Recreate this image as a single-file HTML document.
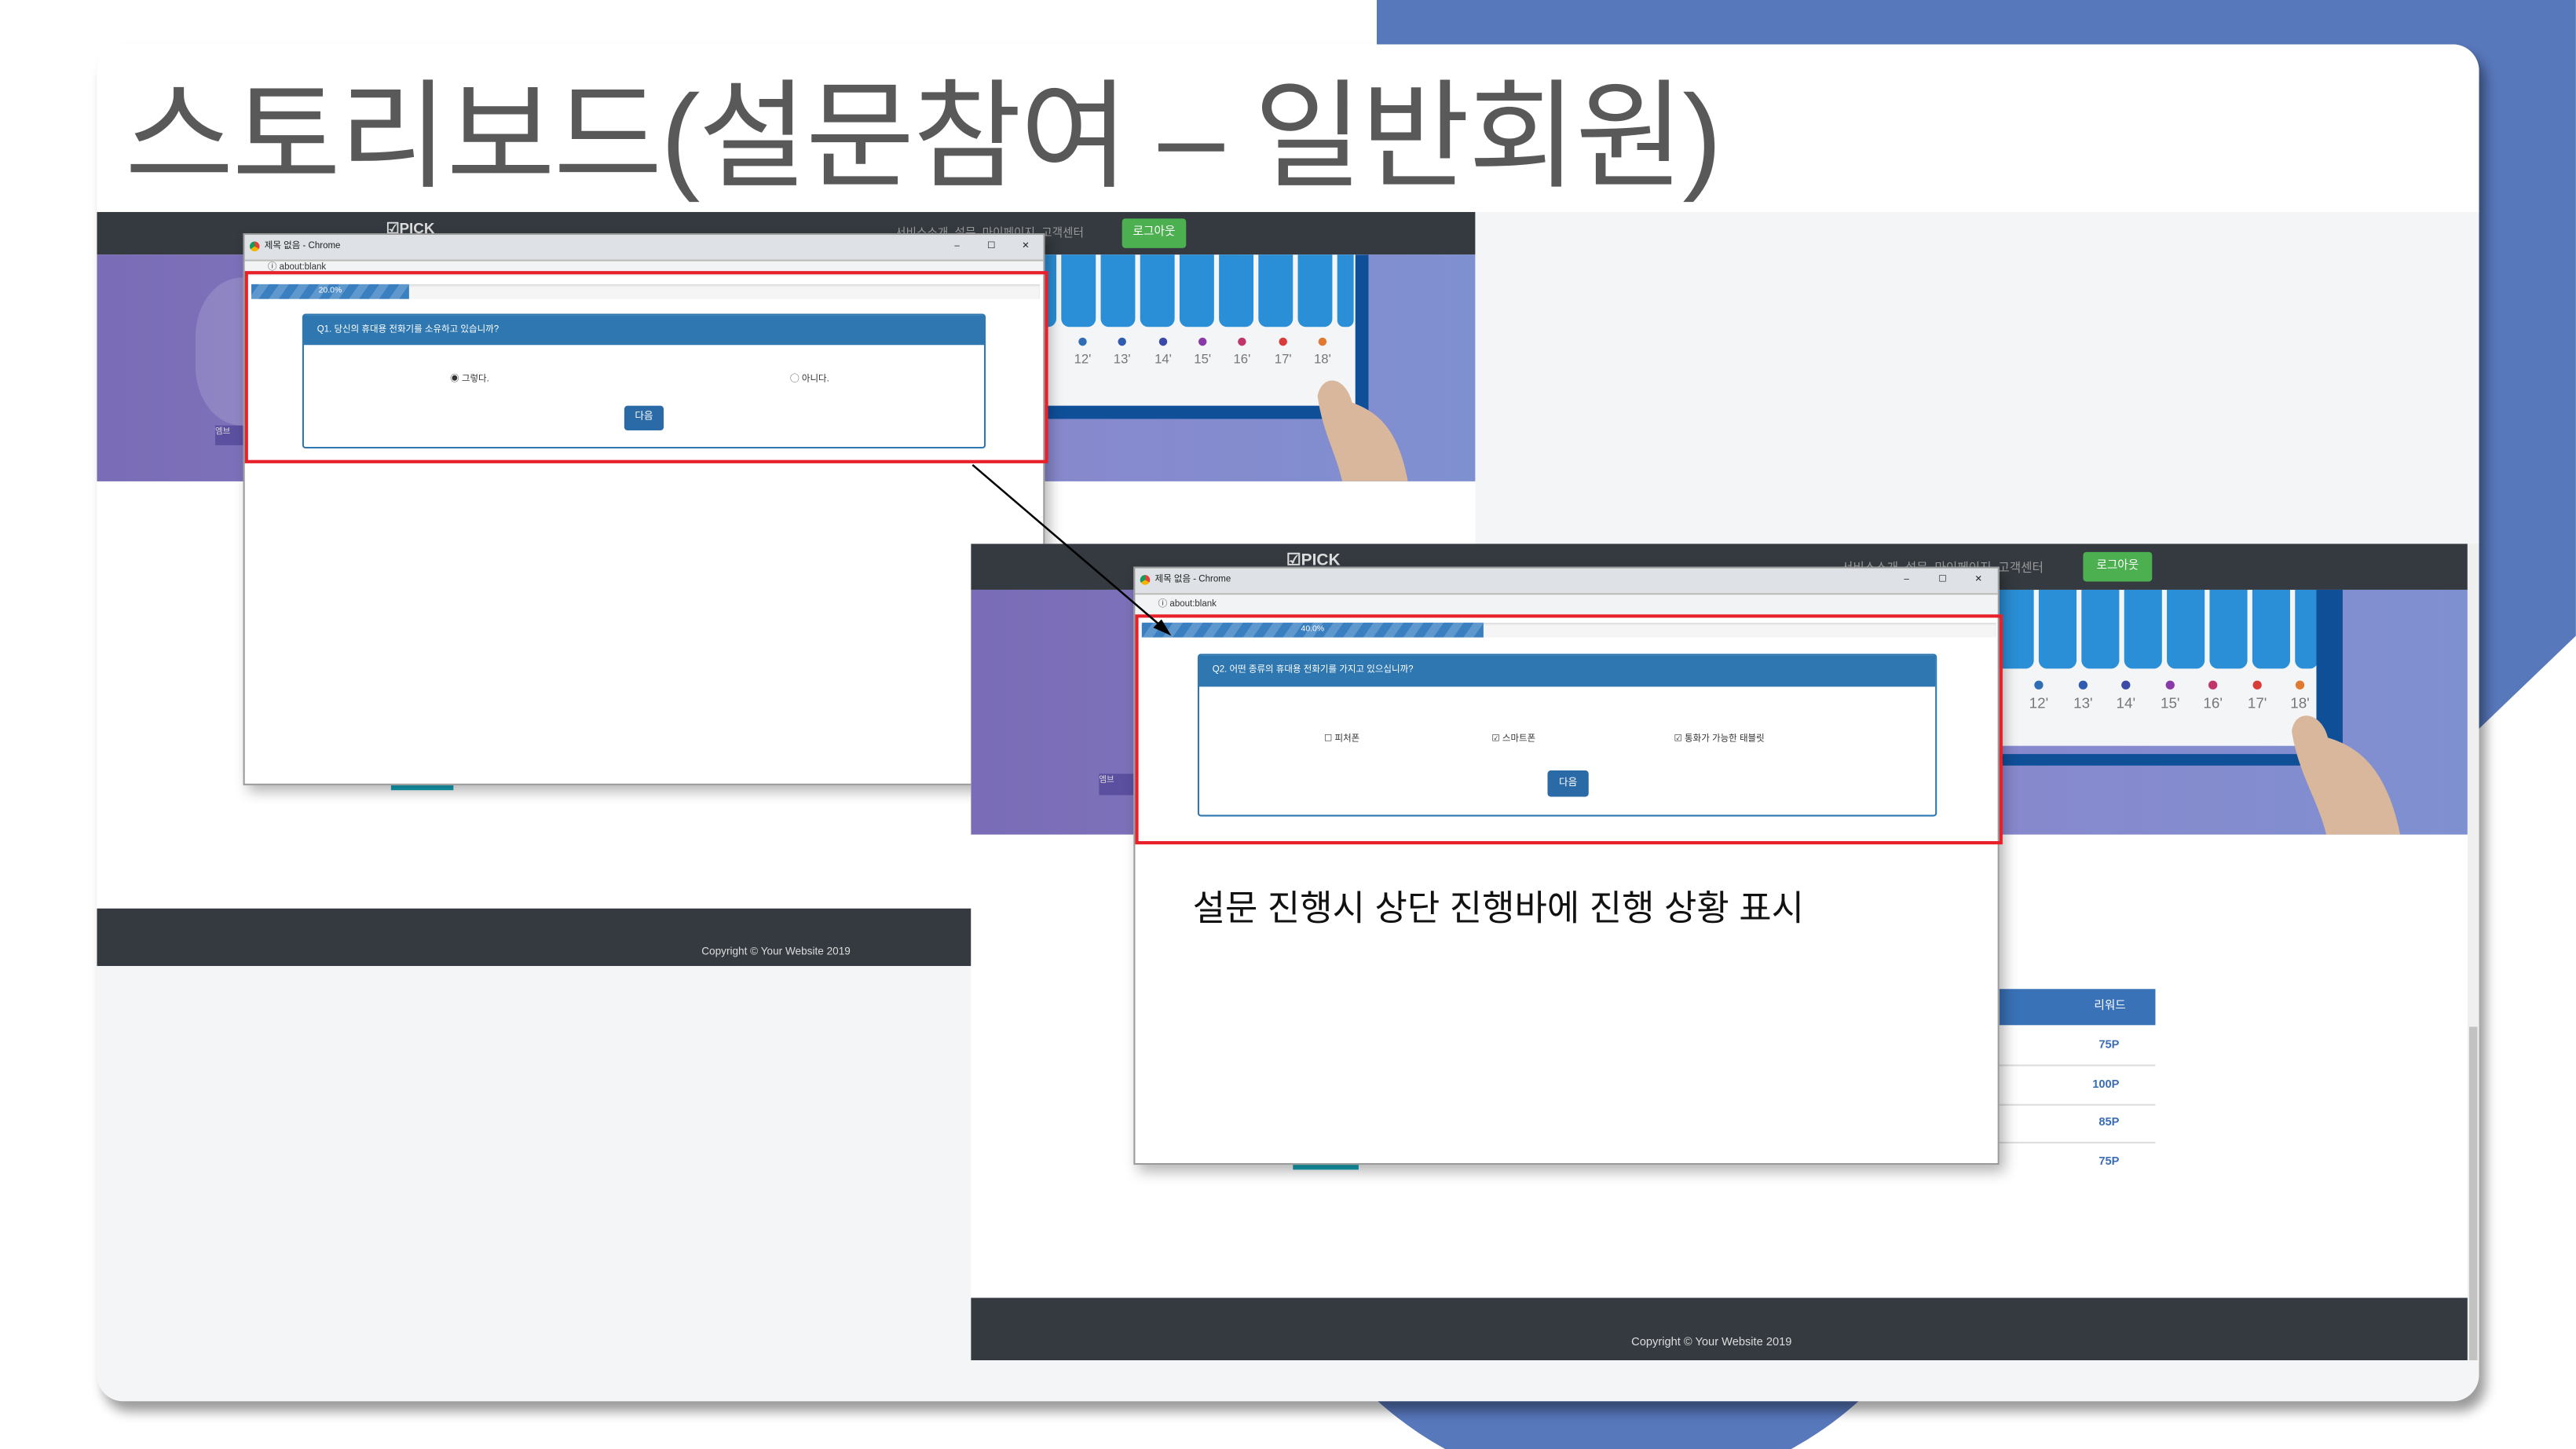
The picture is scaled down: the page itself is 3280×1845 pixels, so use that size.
<!DOCTYPE html>
<html><head><meta charset="utf-8">
<style>
*{margin:0;padding:0;box-sizing:border-box}
html,body{width:3280px;height:1845px;overflow:hidden;background:#fff}
body{font-family:"Liberation Sans","Noto Sans CJK KR",sans-serif}
#w{position:absolute;left:0;top:0;width:1568px;height:882px;transform:scale(2.0918);transform-origin:0 0;overflow:hidden}
.a{position:absolute}
.nav{background:#343a40}
.k{font-family:"Liberation Sans","Noto Sans CJK KR",sans-serif}
.pop{background:#fff;border:1px solid #9a9a9a;box-shadow:3px 4px 8px rgba(0,0,0,.3)}
.tb{background:#dee1e6;font-size:5.5px;color:#222;line-height:15px;padding-left:12px}
.ab{background:#f1f3f4;font-size:5.5px;color:#333;padding-left:14px;border-top:1px solid #bbb}
.prog{background:#f5f5f5;box-shadow:inset 0 1px 1px rgba(0,0,0,.1)}
.fill{background:repeating-linear-gradient(-55deg,#3a7fc0 0 5px,#5e98cd 5px 10px);color:#fff;font-size:5px;text-align:center;line-height:9px}
.ph{background:#2e77b0;color:#fff;font-size:5.5px;padding-left:8px}
.red{border:2px solid #e8202a}
.btn{background:#2a6aa6;color:#fff;font-size:6px;text-align:center;border-radius:2px}
.hero{background:linear-gradient(90deg,#7a6cb6,#8a86cc 60%,#7f90d0)}
</style></head><body><div id="w">
<div class="a" style="left:838px;top:0;width:730px;height:450px;background:#5878bc;clip-path:polygon(0 0,100% 0,100% 86%,91% 100%,0 100%)"></div>
<div class="a" style="left:766px;top:471px;width:438px;height:438px;border-radius:50%;background:#5878bc"></div>
<div class="a" style="left:59px;top:27px;width:1450px;height:826px;border-radius:16px;background:#f4f5f7;box-shadow:4px 6px 7px rgba(0,0,0,.4);overflow:hidden">
 <div class="a" style="left:0;top:0;width:1450px;height:102px;background:#fff"></div>
 <div class="a" style="left:1443px;top:304px;width:7px;height:497px;background:#efefef"></div>
 <div class="a" style="left:1444px;top:598px;width:5px;height:203px;background:#c2c2c2"></div>
</div>
<div class="a k" style="left:76px;top:36px;font-size:72px;line-height:96px;color:#595959;white-space:nowrap;letter-spacing:-1px">스토리보드(설문참여 – 일반회원)</div>

<div class="a" style="left:59px;top:129px;width:839px;height:459px;background:#fff;overflow:hidden">
 <div class="a nav" style="left:0;top:0;width:839px;height:26px"></div>
 <div class="a" style="left:176px;top:5px;color:#ddd;font-size:9px;font-weight:bold">☑PICK</div>
 <div class="a" style="left:486px;top:8px;color:#999;font-size:7px;white-space:nowrap">서비스소개 &nbsp;설문 &nbsp;마이페이지 &nbsp;고객센터</div>
 <div class="a" style="left:624px;top:4px;width:39px;height:18px;background:#4caf50;border-radius:2px;color:#fff;font-size:7px;line-height:18px;text-align:center">로그아웃</div>
 <div class="a hero" style="left:0;top:26px;width:839px;height:138px"></div>
 <div class="a" style="left:60px;top:40px;width:70px;height:90px;border-radius:40%;background:rgba(255,255,255,.15)"></div>
 <svg class="a" style="left:560px;top:26px" width="279" height="138">
  <rect x="0" y="0" width="212" height="92" fill="#f4f5f6"/>
  <g fill="#2a8fd6"><rect x="3" y="-5" width="21" height="49" rx="5"/><rect x="27" y="-5" width="21" height="49" rx="5"/><rect x="51" y="-5" width="21" height="49" rx="5"/><rect x="75" y="-5" width="21" height="49" rx="5"/><rect x="99" y="-5" width="21" height="49" rx="5"/><rect x="123" y="-5" width="21" height="49" rx="5"/><rect x="147" y="-5" width="21" height="49" rx="5"/><rect x="171" y="-5" width="21" height="49" rx="5"/><rect x="195" y="-5" width="10" height="49" rx="4"/></g>
  <g><circle cx="40" cy="53" r="2.5" fill="#2f6db5"/><circle cx="64" cy="53" r="2.5" fill="#2f5cb0"/><circle cx="89" cy="53" r="2.5" fill="#3a4aa8"/><circle cx="113" cy="53" r="2.5" fill="#8a3aa8"/><circle cx="137" cy="53" r="2.5" fill="#c0356a"/><circle cx="162" cy="53" r="2.5" fill="#d93a3a"/><circle cx="186" cy="53" r="2.5" fill="#e07a30"/></g>
  <g font-size="8" fill="#777" text-anchor="middle" font-family="Liberation Sans"><text x="40" y="66">12'</text><text x="64" y="66">13'</text><text x="89" y="66">14'</text><text x="113" y="66">15'</text><text x="137" y="66">16'</text><text x="162" y="66">17'</text><text x="186" y="66">18'</text></g>
  <rect x="0" y="92" width="214" height="8" fill="#0f4f98"/><rect x="206" y="0" width="8" height="100" fill="#0f4f98"/>
  <path d="M183 86 C186 72 200 74 204 90 C220 96 232 106 238 138 L198 138 C194 120 186 108 183 86Z" fill="#d9b79c"/>
 </svg>
 <div class="a" style="left:72px;top:130px;width:20px;height:12px;background:#5b4fa0;color:#ddd;font-size:5px">엠브</div>
 <div class="a" style="left:179px;top:344px;width:38px;height:8px;background:#17a2b8"></div>
 <div class="a nav" style="left:0;top:424px;width:839px;height:35px"></div>
 <div class="a" style="left:368px;top:447px;color:#ddd;font-size:6.5px;white-space:nowrap">Copyright © Your Website 2019</div>
</div>
<div class="a pop" style="left:148px;top:142px;width:488px;height:336px">
 <div class="a tb" style="left:0;top:0;width:486px;height:15px">제목 없음 - Chrome<span style="position:absolute;left:432px">–</span><span style="position:absolute;left:452px">☐</span><span style="position:absolute;left:473px">✕</span></div>
 <div class="a" style="left:3px;top:4px;width:6px;height:6px;border-radius:50%;background:conic-gradient(#db4437 0 33%,#f4b400 0 66%,#0f9d58 0)"></div>
 <div class="a ab" style="left:0;top:15px;width:486px;height:10px;line-height:9px">ⓘ about:blank</div>
 <div class="a prog" style="left:4px;top:30px;width:480px;height:9px"><div class="a fill" style="left:0;top:0;width:96px;height:9px">20.0%</div></div>
 <div class="a" style="left:35px;top:48px;width:416px;height:82px;border:1px solid #2e77b0;border-radius:2px;background:#fff">
  <div class="a ph" style="left:0;top:0;width:414px;height:18px;line-height:18px">Q1. 당신의 휴대용 전화기를 소유하고 있습니까?</div>
  <div class="a" style="left:89px;top:34px;font-size:5.5px;color:#333;white-space:nowrap">◉ 그렇다.</div>
  <div class="a" style="left:296px;top:34px;font-size:5.5px;color:#333;white-space:nowrap">◯ 아니다.</div>
  <div class="a btn" style="left:195px;top:55px;width:24px;height:15px;line-height:15px">다음</div>
 </div>
</div>
<div class="a red" style="left:149px;top:165px;width:489px;height:117px"></div>

<div class="a" style="left:591px;top:331px;width:911px;height:497px;background:#fff;overflow:hidden">
 <div class="a nav" style="left:0;top:0;width:911px;height:28px"></div>
 <div class="a" style="left:192px;top:5px;color:#ddd;font-size:10px;font-weight:bold">☑PICK</div>
 <div class="a" style="left:530px;top:9px;color:#999;font-size:7.5px;white-space:nowrap">서비스소개 &nbsp;설문 &nbsp;마이페이지 &nbsp;고객센터</div>
 <div class="a" style="left:677px;top:5px;width:42px;height:18px;background:#4caf50;border-radius:2px;color:#fff;font-size:7px;line-height:18px;text-align:center">로그아웃</div>
 <div class="a hero" style="left:0;top:28px;width:911px;height:149px"></div>
 <svg class="a" style="left:620px;top:28px" width="291" height="149">
  <rect x="0" y="0" width="210" height="95" fill="#f4f5f6"/>
  <g fill="#2a8fd6"><rect x="4" y="-5" width="23" height="53" rx="5"/><rect x="30" y="-5" width="23" height="53" rx="5"/><rect x="56" y="-5" width="23" height="53" rx="5"/><rect x="82" y="-5" width="23" height="53" rx="5"/><rect x="108" y="-5" width="23" height="53" rx="5"/><rect x="134" y="-5" width="23" height="53" rx="5"/><rect x="160" y="-5" width="23" height="53" rx="5"/><rect x="186" y="-5" width="14" height="53" rx="5"/></g>
  <g><circle cx="30" cy="58" r="2.7" fill="#2f6db5"/><circle cx="57" cy="58" r="2.7" fill="#2f5cb0"/><circle cx="83" cy="58" r="2.7" fill="#3a4aa8"/><circle cx="110" cy="58" r="2.7" fill="#8a3aa8"/><circle cx="136" cy="58" r="2.7" fill="#c0356a"/><circle cx="163" cy="58" r="2.7" fill="#d93a3a"/><circle cx="189" cy="58" r="2.7" fill="#e07a30"/></g>
  <g font-size="9" fill="#777" text-anchor="middle" font-family="Liberation Sans"><text x="30" y="72">12'</text><text x="57" y="72">13'</text><text x="83" y="72">14'</text><text x="110" y="72">15'</text><text x="136" y="72">16'</text><text x="163" y="72">17'</text><text x="189" y="72">18'</text></g>
  <rect x="0" y="100" width="215" height="7" fill="#0f4f98"/><rect x="199" y="0" width="16" height="107" fill="#0f4f98"/>
  <path d="M184 86 C186 72 202 74 206 90 C226 96 242 110 250 149 L205 149 C200 128 188 112 184 86Z" fill="#d9b79c"/>
 </svg>
 <div class="a" style="left:78px;top:140px;width:22px;height:13px;background:#5b4fa0;color:#ddd;font-size:5px">엠브</div>
 <div class="a" style="left:626px;top:271px;width:95px;height:22px;background:#3a72b8;color:#fff;font-size:7px;line-height:22px;text-align:right;padding-right:18px">리워드</div>
 <div class="a" style="left:626px;top:294px;width:95px;height:93px;font-size:7px;font-weight:bold;color:#3a6db5;text-align:right;padding-right:22px;line-height:23.5px">75P<br>100P<br>85P<br>75P</div>
 <div class="a" style="left:626px;top:317px;width:95px;height:1px;background:#ddd"></div>
 <div class="a" style="left:626px;top:341px;width:95px;height:1px;background:#ddd"></div>
 <div class="a" style="left:626px;top:364px;width:95px;height:1px;background:#ddd"></div>
 <div class="a" style="left:196px;top:375px;width:40px;height:6px;background:#17a2b8"></div>
 <div class="a nav" style="left:0;top:459px;width:911px;height:38px"></div>
 <div class="a" style="left:402px;top:483px;color:#ddd;font-size:7px;white-space:nowrap">Copyright © Your Website 2019</div>
</div>
<div class="a pop" style="left:690px;top:345px;width:527px;height:364px">
 <div class="a tb" style="left:0;top:0;width:525px;height:15px">제목 없음 - Chrome<span style="position:absolute;left:468px">–</span><span style="position:absolute;left:489px">☐</span><span style="position:absolute;left:511px">✕</span></div>
 <div class="a" style="left:3px;top:4px;width:6px;height:6px;border-radius:50%;background:conic-gradient(#db4437 0 33%,#f4b400 0 66%,#0f9d58 0)"></div>
 <div class="a ab" style="left:0;top:15px;width:525px;height:13px;line-height:12px">ⓘ about:blank</div>
 <div class="a prog" style="left:4px;top:33px;width:520px;height:9px"><div class="a fill" style="left:0;top:0;width:208px;height:9px">40.0%</div></div>
 <div class="a" style="left:38px;top:52px;width:450px;height:99px;border:1px solid #2e77b0;border-radius:2px;background:#fff">
  <div class="a ph" style="left:0;top:0;width:448px;height:19px;line-height:19px">Q2. 어떤 종류의 휴대용 전화기를 가지고 있으십니까?</div>
  <div class="a" style="left:76px;top:46px;font-size:5.5px;color:#333;white-space:nowrap">☐ 피처폰</div>
  <div class="a" style="left:178px;top:46px;font-size:5.5px;color:#333;white-space:nowrap">☑ 스마트폰</div>
  <div class="a" style="left:289px;top:46px;font-size:5.5px;color:#333;white-space:nowrap">☑ 통화가 가능한 태블릿</div>
  <div class="a btn" style="left:212px;top:70px;width:25px;height:16px;line-height:16px">다음</div>
 </div>
 <div class="a k" style="left:35px;top:193px;font-size:21.5px;color:#111;white-space:nowrap;line-height:28px">설문 진행시 상단 진행바에 진행 상황 표시</div>
</div>
<div class="a red" style="left:691px;top:374px;width:528px;height:140px"></div>
<svg class="a" style="left:0;top:0" width="1568" height="882"><line x1="592" y1="283" x2="709" y2="383" stroke="#000" stroke-width="1.2"/><polygon points="713,387 702,382 707,377" fill="#000"/></svg>
</div></body></html>
